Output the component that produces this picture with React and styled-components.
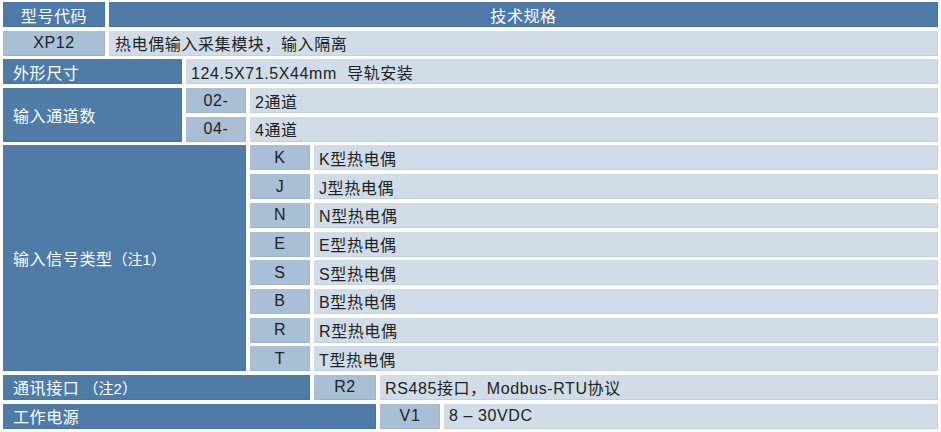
import React from 'react';
import styled, { createGlobalStyle, css } from 'styled-components';

const GlobalStyle = createGlobalStyle`
    body {
        margin: 0;
        background: #fff;
        font-family: "Liberation Sans", "Noto Sans CJK SC", sans-serif;
    }
`

const Table = styled.div`
    display: grid;
    grid-template-columns: 102px 73px 60px 60px 62px 60px 494px;
    grid-auto-rows: 25px;
    column-gap: 4px;
    row-gap: 3.7px;
    padding: 2px 0 0 3px;
`

const variants = {
    head: css`
        background: #4d7aa8;
        color: #fff;
        justify-content: center;
    `,
    label: css`
        background: #4f7ba7;
        color: #fff;
        padding-left: 10px;
    `,
    code: css`
        background: #a9bfd6;
        color: #222;
        justify-content: center;
    `,
    desc: css`
        background: #d0dde8;
        color: #222;
        padding-left: 5px;
    `,
}

const Cell = styled.div`
    display: flex;
    align-items: center;
    font-size: 16px;
    letter-spacing: 0.6px;
    white-space: nowrap;
    grid-column: ${p => p.$col};
    grid-row: ${p => p.$row};
    box-shadow: inset -1px -1px 0 rgba(0, 0, 0, 0.06);
    ${p => variants[p.$kind]}
`

const Note = styled.span`
    font-size: 15px;
    letter-spacing: 0;
`

const types = ['K', 'J', 'N', 'E', 'S', 'B', 'R', 'T'];

const App = () => {
    return (
        <>
            <GlobalStyle />
            <Table>
                <Cell $kind="head" $col="1 / 2" $row="1">型号代码</Cell>
                <Cell $kind="head" $col="2 / 8" $row="1">技术规格</Cell>

                <Cell $kind="code" $col="1 / 2" $row="2">XP12</Cell>
                <Cell $kind="desc" $col="2 / 8" $row="2" style={{ paddingLeft: 6 }}>热电偶输入采集模块，输入隔离</Cell>

                <Cell $kind="label" $col="1 / 3" $row="3">外形尺寸</Cell>
                <Cell $kind="desc" $col="3 / 8" $row="3">124.5X71.5X44mm&nbsp;&nbsp;导轨安装</Cell>

                <Cell $kind="label" $col="1 / 3" $row="4 / 6">输入通道数</Cell>
                <Cell $kind="code" $col="3 / 4" $row="4">02-</Cell>
                <Cell $kind="desc" $col="4 / 8" $row="4">2通道</Cell>
                <Cell $kind="code" $col="3 / 4" $row="5">04-</Cell>
                <Cell $kind="desc" $col="4 / 8" $row="5">4通道</Cell>

                <Cell $kind="label" $col="1 / 4" $row="6 / 14">输入信号类型<Note>（注1）</Note></Cell>
                {types.map((t, i) => (
                    <React.Fragment key={t}>
                        <Cell $kind="code" $col="4 / 5" $row={`${6 + i}`}>{t}</Cell>
                        <Cell $kind="desc" $col="5 / 8" $row={`${6 + i}`}>{t}型热电偶</Cell>
                    </React.Fragment>
                ))}

                <Cell $kind="label" $col="1 / 5" $row="14">通讯接口<Note>&nbsp;（注2）</Note></Cell>
                <Cell $kind="code" $col="5 / 6" $row="14">R2</Cell>
                <Cell $kind="desc" $col="6 / 8" $row="14">RS485接口，Modbus-RTU协议</Cell>

                <Cell $kind="label" $col="1 / 6" $row="15">工作电源</Cell>
                <Cell $kind="code" $col="6 / 7" $row="15">V1</Cell>
                <Cell $kind="desc" $col="7 / 8" $row="15">8 – 30VDC</Cell>
            </Table>
        </>
    )
}

export default App;
